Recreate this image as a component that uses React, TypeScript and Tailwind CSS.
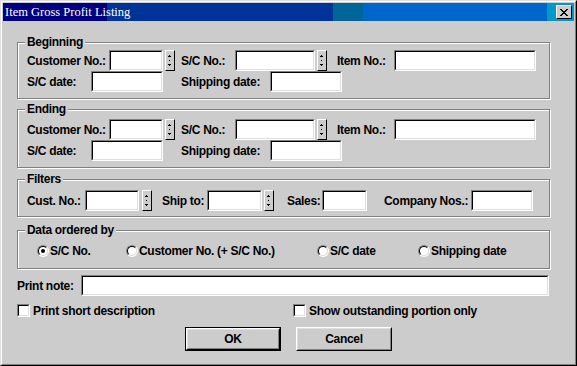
import React from 'react';

const Field = ({ w }: { w: string }) => (
  <div className={`${w} h-[21px] border border-t-[#808080] border-l-[#808080] border-b-white border-r-white`}>
    <div className="h-full w-full bg-white border border-t-black border-l-black border-b-[#dfdfdf] border-r-[#dfdfdf]" />
  </div>
);

const Spin = ({ ml }: { ml: string }) => (
  <div className={`${ml} w-[10px] h-[21px] bg-[#cccccc] border border-t-white border-l-white border-b-black border-r-black`}>
    <svg width="8" height="19" viewBox="0 0 8 19" shapeRendering="crispEdges" className="block">
      <rect x="3" y="4" width="1" height="1" fill="#000" />
      <rect x="2" y="5" width="3" height="1" fill="#000" />
      <rect x="3" y="9" width="1" height="1" fill="#000" />
      <rect x="2" y="13" width="3" height="1" fill="#000" />
      <rect x="3" y="14" width="1" height="1" fill="#000" />
    </svg>
  </div>
);

const Label = ({ w, ml = '', children }: { w: string; ml?: string; children: React.ReactNode }) => (
  <span className={`${w} ${ml} shrink-0 whitespace-nowrap leading-none`}>{children}</span>
);

const Group = ({
  title,
  box,
  children,
}: {
  title: string;
  box: string;
  children: React.ReactNode;
}) => (
  <div
    className={`relative w-[533px] border border-[#808080] shadow-[1px_1px_0_#ffffff,inset_1px_1px_0_#ffffff] ${box}`}
  >
    <span className="absolute left-[7px] -top-[7px] bg-[#cccccc] px-[2px] leading-[13px] whitespace-nowrap">
      {title}
    </span>
    {children}
  </div>
);

const Radio = ({ checked }: { checked?: boolean }) => (
  <div className="w-[12px] h-[12px] rounded-full border border-t-[#808080] border-l-[#808080] border-b-white border-r-white">
    <div className="w-full h-full rounded-full bg-white border border-t-black border-l-black border-b-[#dfdfdf] border-r-[#dfdfdf] flex items-center justify-center">
      {checked && <div className="w-[4px] h-[4px] rounded-full bg-black" />}
    </div>
  </div>
);

const Check = () => (
  <div className="w-[13px] h-[13px] border border-t-[#808080] border-l-[#808080] border-b-white border-r-white">
    <div className="w-full h-full bg-white border border-t-black border-l-black border-b-[#dfdfdf] border-r-[#dfdfdf]" />
  </div>
);

const RangeRows = () => (
  <>
    <div className="flex items-center h-[21px]">
      <Label w="w-[82px]">Customer No.:</Label>
      <Field w="w-[54px]" />
      <Spin ml="ml-[2px]" />
      <Label w="w-[54px]" ml="ml-[6px]">S/C No.:</Label>
      <Field w="w-[80px]" />
      <Spin ml="ml-[2px]" />
      <Label w="w-[57px]" ml="ml-[10px]">Item No.:</Label>
      <Field w="w-[142px]" />
    </div>
    <div className="flex items-center h-[21px]">
      <Label w="w-[64px]">S/C date:</Label>
      <Field w="w-[72px]" />
      <Label w="w-[89px]" ml="ml-[18px]">Shipping date:</Label>
      <Field w="w-[72px]" />
    </div>
  </>
);

export default function App() {
  return (
    <div className="w-[577px] h-[366px] bg-[#cccccc] border border-t-[#dfdfdf] border-l-[#dfdfdf] border-b-black border-r-black font-['Liberation_Sans',Arial,sans-serif] text-[12px] tracking-[-0.3px] font-bold text-black">
      <div className="w-full h-full border border-t-white border-l-white border-b-[#808080] border-r-[#808080] p-[1px]">
        {/* title bar */}
        <div className="h-[18px] flex items-center justify-between pl-[2px] pr-[2px] bg-[linear-gradient(to_right,#000080_0px,#000080_104px,#003399_104px,#003399_330px,#006699_330px,#006699_360px,#0066cc_360px,#0066cc_544px,#0099cc_544px)]">
          <span className="font-['Liberation_Serif',serif] font-normal tracking-normal text-[12.5px] text-white leading-none">
            Item Gross Profit Listing
          </span>
          <div className="w-[16px] h-[14px] bg-[#cccccc] border border-t-white border-l-white border-b-black border-r-black flex items-center justify-center">
            <svg width="10" height="9" viewBox="0 0 10 9" shapeRendering="crispEdges">
              <path d="M1 1h2v1h1v1h2v-1h1v-1h2v1h-1v1h-1v1h-1v1h1v1h1v1h1v1h-2v-1h-1v-1h-2v1h-1v1h-2v-1h1v-1h1v-1h1v-1h-1v-1h-1v-1h-1z" fill="#000" />
            </svg>
          </div>
        </div>

        {/* body */}
        <div className="pl-[14px]">
          <Group title="Beginning" box="mt-[21px] h-[57px] pt-[7px] pl-[9px]">
            <RangeRows />
          </Group>

          <Group title="Ending" box="mt-[10px] h-[59px] pt-[9px] pl-[9px]">
            <RangeRows />
          </Group>

          <Group title="Filters" box="mt-[11px] h-[38px] pt-[10px] pl-[9px]">
            <div className="flex items-center h-[21px]">
              <Label w="w-[58px]">Cust. No.:</Label>
              <Field w="w-[54px]" />
              <Spin ml="ml-[3px]" />
              <Label w="w-[45px]" ml="ml-[10px]">Ship to:</Label>
              <Field w="w-[55px]" />
              <Spin ml="ml-[2px]" />
              <Label w="w-[35px]" ml="ml-[13px]">Sales:</Label>
              <Field w="w-[45px]" />
              <Label w="w-[87px]" ml="ml-[17px]">Company Nos.:</Label>
              <Field w="w-[62px]" />
            </div>
          </Group>

          <Group title="Data ordered by" box="mt-[13px] h-[39px] pt-[13px] pl-[19px]">
            <div className="flex items-center h-[14px]">
              <div className="w-[89px] flex items-center gap-[1px]">
                <Radio checked />
                <span className="leading-none">S/C No.</span>
              </div>
              <div className="w-[191px] flex items-center gap-[1px]">
                <Radio />
                <span className="leading-none">Customer No. (+ S/C No.)</span>
              </div>
              <div className="w-[101px] flex items-center gap-[1px]">
                <Radio />
                <span className="leading-none">S/C date</span>
              </div>
              <div className="flex items-center gap-[1px]">
                <Radio />
                <span className="leading-none">Shipping date</span>
              </div>
            </div>
          </Group>

          <div className="mt-[6px] flex items-center h-[21px]">
            <Label w="w-[64px]">Print note:</Label>
            <Field w="w-[468px]" />
          </div>

          <div className="mt-[8px] flex items-center h-[13px]">
            <div className="w-[276px] flex items-center gap-[3px]">
              <Check />
              <span className="leading-none">Print short description</span>
            </div>
            <div className="flex items-center gap-[3px]">
              <Check />
              <span className="leading-none">Show outstanding portion only</span>
            </div>
          </div>
        </div>

        <div className="mt-[10px] flex justify-center gap-[15px]">
          <div className="w-[96px] h-[24px] border border-black">
            <div className="w-full h-full border border-t-white border-l-white border-b-black border-r-black">
              <div className="w-full h-full border border-t-[#dfdfdf] border-l-[#dfdfdf] border-b-[#808080] border-r-[#808080] flex items-center justify-center leading-none">
                OK
              </div>
            </div>
          </div>
          <div className="w-[96px] h-[24px] border border-t-white border-l-white border-b-black border-r-black">
            <div className="w-full h-full border border-t-[#dfdfdf] border-l-[#dfdfdf] border-b-[#808080] border-r-[#808080] flex items-center justify-center leading-none">
              Cancel
            </div>
          </div>
        </div>
      </div>
    </div>
  );
}
